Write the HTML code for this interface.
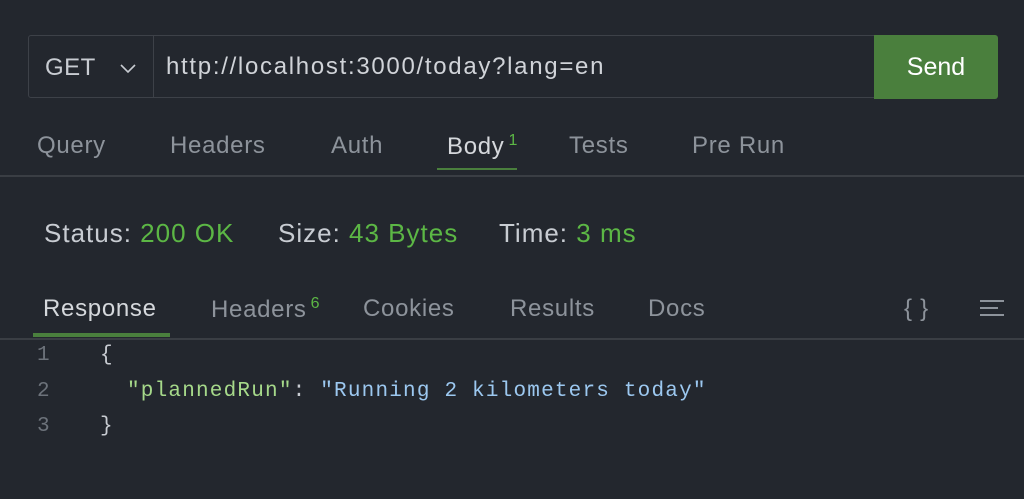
<!DOCTYPE html>
<html><head><style>
body{margin:0;width:1024px;height:499px;background:#23272e;font-family:"Liberation Sans",sans-serif;position:relative;overflow:hidden;color:#9aa0a8}
.a{position:absolute;white-space:nowrap}
.url{left:28px;top:35px;width:969px;height:63px;border:1px solid #3d4148;border-radius:3px;box-sizing:border-box}
.send{left:874px;top:35px;width:124px;height:64px;background:#4a7f3d;border-radius:0 3px 3px 0;color:#fff;font-size:25px;text-align:center;line-height:64px}
.t{font-size:24px;letter-spacing:0.7px;color:#8d939b}
.g{color:#5cb745}
.m{font-family:"Liberation Mono",monospace;font-size:21px;letter-spacing:1.2px}
.s{font-size:26px;letter-spacing:1px;color:#c8ccd2}
</style></head><body>
<div class="a url"></div>
<div class="a" style="left:153px;top:36px;width:1px;height:62px;background:#3d4148"></div>
<div class="a" style="left:45px;top:54px;font-size:24px;letter-spacing:0.5px;color:#c8ccd2">GET</div>
<svg class="a" style="left:119px;top:62px" width="18" height="12"><path d="M2 3 L9 10 L16 3" stroke="#c8ccd2" stroke-width="1.6" fill="none"/></svg>
<div class="a" style="left:166px;top:53px;font-size:24px;letter-spacing:1.7px;color:#d0d3d8">http://localhost:3000/today?lang=en</div>
<div class="a send">Send</div>

<div class="a t" style="left:37px;top:132px">Query</div>
<div class="a t" style="left:170px;top:132px">Headers</div>
<div class="a t" style="left:331px;top:132px">Auth</div>
<div class="a t" style="left:447px;top:132px;color:#d5d8dc">Body<sup class="g" style="font-size:16px;margin-left:4px">1</sup></div>
<div class="a t" style="left:569px;top:132px">Tests</div>
<div class="a t" style="left:692px;top:132px">Pre Run</div>
<div class="a" style="left:437px;top:168px;width:80px;height:2px;background:#4a7f3d"></div>
<div class="a" style="left:0;top:175px;width:1024px;height:2px;background:#3a3e44"></div>

<div class="a s" style="left:44px;top:218px">Status: <span class="g">200 OK</span></div>
<div class="a s" style="left:278px;top:218px">Size: <span class="g">43 Bytes</span></div>
<div class="a s" style="left:499px;top:218px">Time: <span class="g">3 ms</span></div>

<div class="a t" style="left:43px;top:295px;color:#d5d8dc">Response</div>
<div class="a t" style="left:211px;top:295px">Headers<sup class="g" style="font-size:16px;margin-left:4px">6</sup></div>
<div class="a t" style="left:363px;top:295px">Cookies</div>
<div class="a t" style="left:510px;top:295px">Results</div>
<div class="a t" style="left:648px;top:295px">Docs</div>
<div class="a t" style="left:904px;top:295px">{ }</div>
<svg class="a" style="left:978px;top:299px" width="30" height="20"><path d="M2 2H26M2 9H20M2 16H26" stroke="#8d939b" stroke-width="2"/></svg>
<div class="a" style="left:33px;top:333px;width:137px;height:4px;background:#4a7f3d"></div>
<div class="a" style="left:0;top:338px;width:1024px;height:2px;background:#3a3e44"></div>

<div class="a m" style="left:37px;top:344px;color:#6c727a">1</div>
<div class="a m" style="left:37px;top:380px;color:#6c727a">2</div>
<div class="a m" style="left:37px;top:415px;color:#6c727a">3</div>
<div class="a m" style="left:100px;top:344px;color:#c8ccd2">{</div>
<div class="a m" style="left:127px;top:380px;color:#c8ccd2"><span style="color:#a6d98a">"plannedRun"</span>: <span style="color:#9cc8f0">"Running 2 kilometers today"</span></div>
<div class="a m" style="left:100px;top:415px;color:#c8ccd2">}</div>
</body></html>
